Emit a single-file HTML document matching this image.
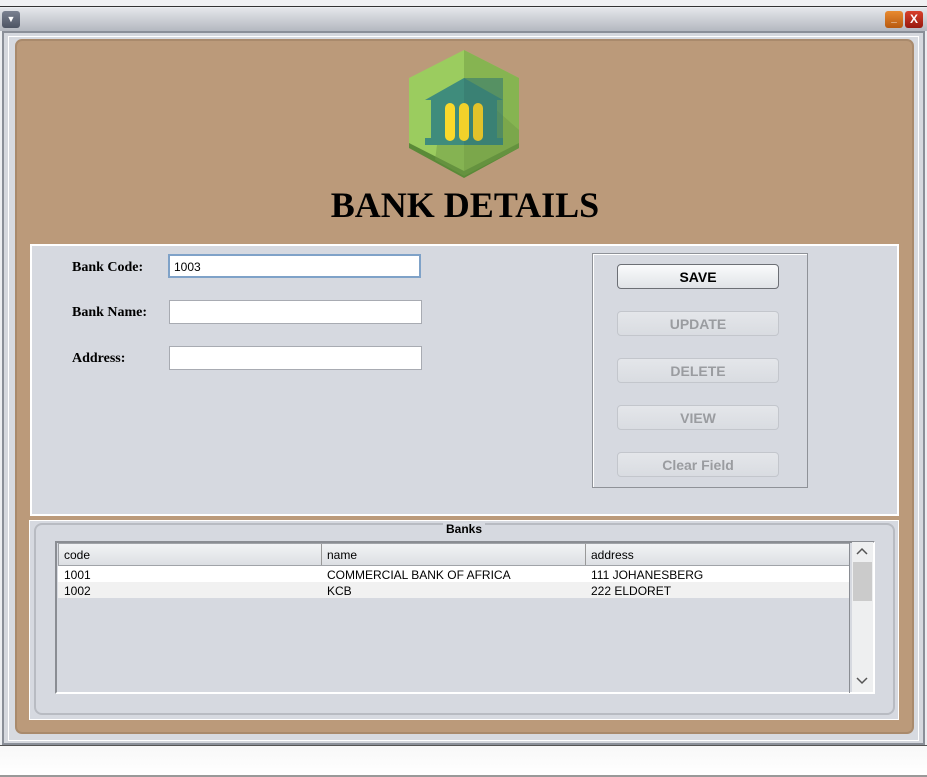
<!DOCTYPE html>
<html><head><style>
*{margin:0;padding:0;box-sizing:border-box}
body{width:927px;height:777px;background:#eceef1;position:relative;overflow:hidden;font-family:"Liberation Sans",sans-serif}
.a{position:absolute}
.lbl{font-family:"Liberation Serif",serif;font-weight:bold;font-size:14px}
.tf{background:#fff;border:1px solid #a8abb2;height:24px;width:253px;font-size:12px;padding:5px 4px}
.btn{left:617px;width:162px;height:25px;border:1px solid #c3c6cc;border-radius:4px;background:linear-gradient(#e4e6ea,#d9dce1);font-weight:bold;font-size:14px;color:#9a9ca0;text-align:center;line-height:25px}
.td{font-size:12px;position:absolute}
</style></head><body>
<div class="a" style="left:0;top:0;width:927px;height:7px;background:#f0f1f3;border-bottom:1px solid #333"></div>
<div class="a" style="left:0;top:8px;width:927px;height:23px;background:linear-gradient(#e4e6ea,#b4b8c0)"></div>
<div class="a" style="left:2px;top:11px;width:18px;height:17px;border-radius:3px;background:linear-gradient(#7a8190,#4d5463);color:#fff;font-size:9px;text-align:center;line-height:17px">▼</div>
<div class="a" style="left:885px;top:11px;width:18px;height:17px;border-radius:3px;background:linear-gradient(#e88a30,#b85a10);color:#fff;font-size:10px;text-align:center;line-height:15px;font-weight:bold">_</div>
<div class="a" style="left:905px;top:11px;width:18px;height:17px;border-radius:3px;background:linear-gradient(#d8402a,#981a10);color:#fff;font-size:12px;text-align:center;line-height:17px;font-weight:bold">X</div>
<div class="a" style="left:2px;top:31px;width:923px;height:714px;background:#d5d8de;border:2px solid #8a8f98"></div>
<div class="a" style="left:8px;top:36px;width:911px;height:705px;background:#d7dae0;border:1px solid #fff"></div>
<div class="a" style="left:15px;top:39px;width:899px;height:695px;background:#bb9a7a;border-radius:7px;border:2px solid #a98a6c"></div>
<svg class="a" style="left:405px;top:48px" width="118" height="132" viewBox="0 0 118 132">
<polygon points="59,2 114,30 114,100 59,128 4,100 4,30" fill="#9bcc5f"/>
<polygon points="59,2 114,30 114,100 59,128" fill="#86b451"/>
<polygon points="4,95 59,123 114,95 114,100 59,130 4,100" fill="#5a8a38"/>
<polygon points="38,52 59,38 80,52 114,82 114,100 59,128 30,112" fill="#6f9a45" opacity="0.5"/>
<polygon points="20,52 59,30 98,52" fill="#3f8c7c"/>
<rect x="26" y="50" width="66" height="44" fill="#3f8c7c"/>
<rect x="20" y="90" width="78" height="7" fill="#3f8c7c"/>
<rect x="59" y="30" width="39" height="67" fill="#377a70" opacity="0.6"/>
<rect x="40" y="55" width="10" height="38" rx="5" fill="#fbd92a"/>
<rect x="54" y="55" width="10" height="38" rx="5" fill="#f2d12a"/>
<rect x="68" y="55" width="10" height="38" rx="5" fill="#e2c22a"/>
</svg>
<div class="a" style="left:0;width:930px;top:184px;text-align:center;font-family:'Liberation Serif',serif;font-weight:bold;font-size:36px">BANK DETAILS</div>
<div class="a" style="left:30px;top:244px;width:869px;height:272px;background:#d6d9e0;border:2px solid #fff"></div>
<div class="a lbl" style="left:72px;top:260px">Bank Code:</div>
<div class="a lbl" style="left:72px;top:305px">Bank Name:</div>
<div class="a lbl" style="left:72px;top:351px">Address:</div>
<div class="a tf" style="left:168px;top:254px;border:2px solid #7fa2c8;padding:4px 4px">1003</div>
<div class="a tf" style="left:169px;top:300px"></div>
<div class="a tf" style="left:169px;top:346px"></div>
<div class="a" style="left:592px;top:253px;width:216px;height:235px;border:1px solid #8f9298;box-shadow:inset 1px 1px 0 #fff"></div>
<div class="a btn" style="top:264px;border-color:#6c6f75;background:linear-gradient(#fafbfc,#e0e3e7);color:#000">SAVE</div>
<div class="a btn" style="top:311px">UPDATE</div>
<div class="a btn" style="top:358px">DELETE</div>
<div class="a btn" style="top:405px">VIEW</div>
<div class="a btn" style="top:452px">Clear Field</div>
<div class="a" style="left:29px;top:520px;width:870px;height:200px;background:#d6d9e0;border:1px solid #fff"></div>
<div class="a" style="left:34px;top:523px;width:861px;height:192px;border:2px solid #b8bbc2;border-radius:8px"></div>
<div class="a" style="left:443px;top:522px;background:#d6d9e0;padding:0 3px;font-size:12px;font-weight:bold">Banks</div>
<div class="a" style="left:55px;top:541px;width:820px;height:153px;border:2px solid #8a8d93;background:#d6d9e0;border-right-color:#fff;border-bottom-color:#fff"></div>
<div class="a" style="left:58px;top:543px;width:792px;height:23px;background:linear-gradient(#f2f3f5,#dcdfe3);border:1px solid #a0a3a8"></div>
<div class="a" style="left:321px;top:544px;width:1px;height:21px;background:#999"></div>
<div class="a" style="left:585px;top:544px;width:1px;height:21px;background:#999"></div>
<div class="td" style="left:64px;top:548px">code</div>
<div class="td" style="left:327px;top:548px">name</div>
<div class="td" style="left:591px;top:548px">address</div>
<div class="a" style="left:58px;top:566px;width:792px;height:16px;background:#fff"></div>
<div class="a" style="left:58px;top:582px;width:792px;height:16px;background:#f1f1f1"></div>
<div class="a" style="left:849px;top:543px;width:1px;height:150px;background:#8a8d93"></div>
<div class="td" style="left:64px;top:568px">1001</div>
<div class="td" style="left:327px;top:568px">COMMERCIAL BANK OF AFRICA</div>
<div class="td" style="left:591px;top:568px">111 JOHANESBERG</div>
<div class="td" style="left:64px;top:584px">1002</div>
<div class="td" style="left:327px;top:584px">KCB</div>
<div class="td" style="left:591px;top:584px">222 ELDORET</div>
<div class="a" style="left:852px;top:542px;width:21px;height:150px;background:#eeeff0"></div>
<div class="a" style="left:853px;top:562px;width:19px;height:39px;background:#cbcbcb"></div>
<svg class="a" style="left:856px;top:547px" width="12" height="8"><polyline points="1,7 6,2 11,7" fill="none" stroke="#555" stroke-width="1.5"/></svg>
<svg class="a" style="left:856px;top:677px" width="12" height="8"><polyline points="1,1 6,6 11,1" fill="none" stroke="#555" stroke-width="1.5"/></svg>
<div class="a" style="left:0;top:745px;width:927px;height:32px;background:linear-gradient(#f8f8f8,#fff);border-top:1px solid #555;border-bottom:2px solid #999"></div>
</body></html>
